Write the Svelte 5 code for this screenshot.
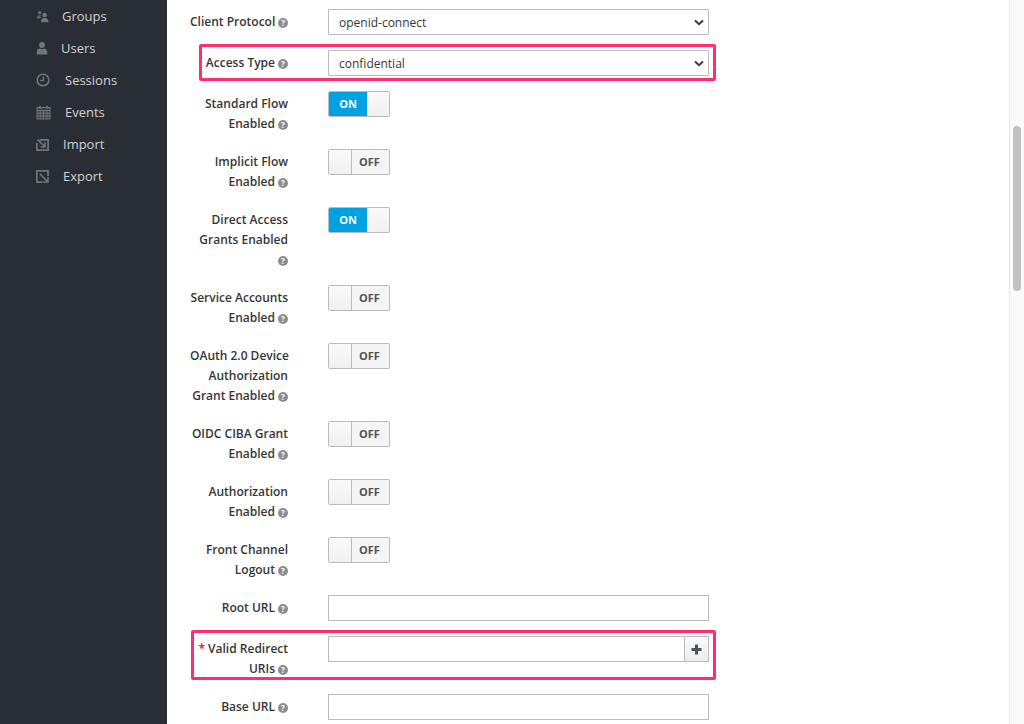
<script>
  const nav = [
    { name: 'Groups', icon: 'groups', gap: 13 },
    { name: 'Users', icon: 'user', gap: 13 },
    { name: 'Sessions', icon: 'clock', gap: 15 },
    { name: 'Events', icon: 'cal', gap: 14 },
    { name: 'Import', icon: 'import', gap: 14 },
    { name: 'Export', icon: 'export', gap: 14 }
  ];
  const toggles1 = [
    { lines: ['Standard Flow', 'Enabled'], on: true },
    { lines: ['Implicit Flow', 'Enabled'], on: false },
    { lines: ['Direct Access', 'Grants Enabled', ''], on: true },
    { lines: ['Service Accounts', 'Enabled'], on: false },
    { lines: ['OAuth 2.0 Device', 'Authorization', 'Grant Enabled'], on: false },
    { lines: ['OIDC CIBA Grant', 'Enabled'], on: false },
    { lines: ['Authorization', 'Enabled'], on: false },
    { lines: ['Front Channel', 'Logout'], on: false }
  ];
</script>

{#snippet help()}
  <span class="help" aria-hidden="true">?</span>
{/snippet}

{#snippet chevron()}
  <svg class="chev" width="10" height="7" viewBox="0 0 10 7"><path d="M1 1.400 5 5.200 9 1.400" fill="none" stroke="#3d3d3d" stroke-width="2"/></svg>
{/snippet}

<div class="page">
  <aside class="side">
    {#each nav as n}
      <div class="nav">
        <span class="ico">
          {#if n.icon === 'groups'}
            <svg width="13" height="13" viewBox="0 0 13 13" fill="#72767b"><circle cx="3.600" cy="2.600" r="1.900" opacity=".75"/><path d="M0.500 8.400C.5 6 1.800 5.200 3.600 5.200c.7 0 1.200.1 1.600.4-.6.7-.9 1.600-.9 2.800z" opacity=".75"/><circle cx="8.600" cy="5" r="2.200"/><path d="M4.900 12.200c0-3 1.400-4.400 3.700-4.400s3.800 1.400 3.800 4.400z"/></svg>
          {:else if n.icon === 'user'}
            <svg width="12" height="13" viewBox="0 0 12 13" fill="#72767b"><circle cx="6" cy="3" r="2.900"/><path d="M.8 12.600V9.600c0-1.900 2-3 3.300-3.100.6.4 1.200.6 1.900.6s1.300-.2 1.900-.6c1.300.1 3.300 1.200 3.300 3.100v3z"/></svg>
          {:else if n.icon === 'clock'}
            <svg width="14" height="14" viewBox="0 0 14 14" fill="none" stroke="#72767b"><circle cx="7" cy="7" r="5.800" stroke-width="1.600"/><path d="M7.400 3.400V7.500H4.200" stroke-width="1.300"/></svg>
          {:else if n.icon === 'cal'}
            <svg width="15" height="15" viewBox="0 0 15 15" fill="none" stroke="#72767b" stroke-width="1"><rect x="1" y="2.500" width="13" height="11.500" fill="#3b3f45"/><path d="M1 5.500H14M1 8.200H14M1 11H14M4.200 5.500V14M7.500 5.500V14M10.800 5.500V14"/><path d="M4 .8V3.800M11 .8V3.800" stroke-width="1.600"/></svg>
          {:else if n.icon === 'import'}
            <svg width="13" height="13" viewBox="0 0 13 13" fill="none" stroke="#72767b" stroke-width="1.700"><path d="M3.500 1.800H12.100V12.100H.9V5"/><path d="M1.500 1.500 8.300 8.300M9 4.500V9H4.500" stroke-width="1.600"/></svg>
          {:else}
            <svg width="13" height="13" viewBox="0 0 13 13" fill="none" stroke="#72767b" stroke-width="1.700"><path d="M12 6V.9H.9V12.100H6.500"/><path d="M4 4 11.500 11.500M12 7V12H7" stroke-width="1.600"/></svg>
          {/if}
        </span>
        <span class="nm" style="margin-left: {n.gap}px">{n.name}</span>
      </div>
    {/each}
  </aside>

  <main class="form">
    <div class="row">
      <div class="lab"><span>Client Protocol{@render help()}</span></div>
      <div class="sel"><select><option>openid-connect</option></select>{@render chevron()}</div>
    </div>
    <div class="row">
      <span class="mark mark-a"></span>
      <div class="lab"><span>Access Type{@render help()}</span></div>
      <div class="sel"><select><option>confidential</option></select>{@render chevron()}</div>
    </div>
    {#each toggles1 as t}
      <div class="row">
        <div class="lab">
          {#each t.lines as l, i}
            <span class="ln">{l}{#if i === t.lines.length - 1}{@render help()}{/if}</span>
          {/each}
        </div>
        {#if t.on}
          <div class="sw"><span class="on">ON</span><span class="knob"></span></div>
        {:else}
          <div class="sw"><span class="knob k2"></span><span class="off">OFF</span></div>
        {/if}
      </div>
    {/each}
    <div class="row">
      <div class="lab"><span>Root URL{@render help()}</span></div>
      <div class="inp"></div>
    </div>
    <div class="row">
      <span class="mark mark-b"></span>
      <div class="lab">
        <span class="ln"><span class="req">*</span> Valid Redirect</span>
        <span class="ln">URIs{@render help()}</span>
      </div>
      <div class="group">
        <div class="inp grow"></div>
        <div class="plus"><svg width="11" height="11" viewBox="0 0 11 11"><path d="M5.500 .5V10.500M.5 5.500H10.500" stroke="#4d5258" stroke-width="3"/></svg></div>
      </div>
    </div>
    <div class="row">
      <div class="lab"><span>Base URL{@render help()}</span></div>
      <div class="inp"></div>
    </div>
  </main>

  <div class="bar"><div class="thumb"></div></div>
</div>

<style>
  :global(body) {
    margin: 0;
    overflow: hidden;
    background: #fff;
  }
  .page {
    display: flex;
    height: 724px;
    width: 1024px;
    overflow: hidden;
    position: relative;
    font-family: "Open Sans", "Liberation Sans", sans-serif;
    font-size: 12px;
    color: #363636;
  }
  .side {
    width: 167px;
    flex: none;
    background: #292e34;
    padding-left: 36px;
    box-sizing: border-box;
  }
  .nav {
    display: flex;
    align-items: center;
    height: 32px;
    color: #d1d1d1;
    font-size: 13px;
  }
  .ico {
    display: inline-flex;
    align-items: center;
    height: 15px;
  }
  .form {
    padding: 9px 0 0 23px;
    width: 519px;
    flex: none;
  }
  .row {
    position: relative;
    display: grid;
    grid-template-columns: 98px 381px;
    column-gap: 40px;
    margin-bottom: 15px;
  }
  .lab {
    padding-top: 3px;
    line-height: 20px;
    text-align: right;
    font-weight: 600;
    color: #363636;
  }
  .ln {
    display: block;
    height: 20px;
    white-space: nowrap;
  }
  .lab > span {
    white-space: nowrap;
  }
  .help {
    display: inline-flex;
    align-items: center;
    justify-content: center;
    width: 10px;
    height: 10px;
    border-radius: 50%;
    background: #8b8d8f;
    color: #fff;
    font-size: 8px;
    font-weight: 700;
    line-height: 1;
    vertical-align: 0;
    margin-left: 3px;
  }
  .req {
    color: #f00;
  }
  .sel {
    position: relative;
    height: 26px;
  }
  select {
    appearance: none;
    display: block;
    width: 100%;
    height: 26px;
    box-sizing: border-box;
    border: 1px solid #bbb;
    border-radius: 1px;
    background: #fff;
    padding: 0 10px;
    font: inherit;
    font-size: 12px;
    color: #363636;
  }
  .chev {
    position: absolute;
    right: 5px;
    top: 10px;
    pointer-events: none;
  }
  .inp {
    height: 26px;
    box-sizing: border-box;
    border: 1px solid #bbb;
    background: #fff;
  }
  .group {
    display: flex;
    height: 26px;
  }
  .grow {
    flex: 1;
  }
  .plus {
    width: 24px;
    box-sizing: border-box;
    border: 1px solid #bbb;
    border-left: 0;
    background: linear-gradient(#fafafa, #ededed);
    display: flex;
    align-items: center;
    justify-content: center;
  }
  .sw {
    display: flex;
    width: 62px;
    height: 26px;
    box-sizing: border-box;
    border: 1px solid #bbb;
    border-radius: 2px;
    overflow: hidden;
    font-size: 11px;
    font-weight: 700;
    line-height: 24px;
    text-align: center;
  }
  .on {
    width: 38px;
    background: #00a1e0;
    color: #fff;
  }
  .off {
    flex: 1;
    background: #f5f5f5;
    color: #4d5258;
    padding-right: 2px;
  }
  .knob {
    flex: 1;
    background: linear-gradient(#fafafa, #f0f0f0);
    border-left: 1px solid #e4e4e4;
  }
  .knob.k2 {
    flex: none;
    width: 22px;
    border-left: 0;
    border-right: 1px solid #bbb;
  }
  .mark {
    position: absolute;
    box-sizing: border-box;
    border: 3px solid #ff2e6f;
    border-radius: 2px;
    pointer-events: none;
  }
  .mark-a {
    left: 9px;
    top: -6px;
    width: 517px;
    height: 37px;
  }
  .mark-b {
    left: 1px;
    top: -6px;
    width: 525px;
    height: 50px;
  }
  .bar {
    position: absolute;
    right: 0;
    top: 0;
    bottom: 0;
    width: 15px;
    box-sizing: border-box;
    background: #fafafa;
    border-left: 1px solid #e8e8e8;
  }
  .thumb {
    position: absolute;
    left: 3px;
    top: 126px;
    width: 8px;
    height: 165px;
    border-radius: 4px;
    background: #c1c1c1;
  }
</style>
